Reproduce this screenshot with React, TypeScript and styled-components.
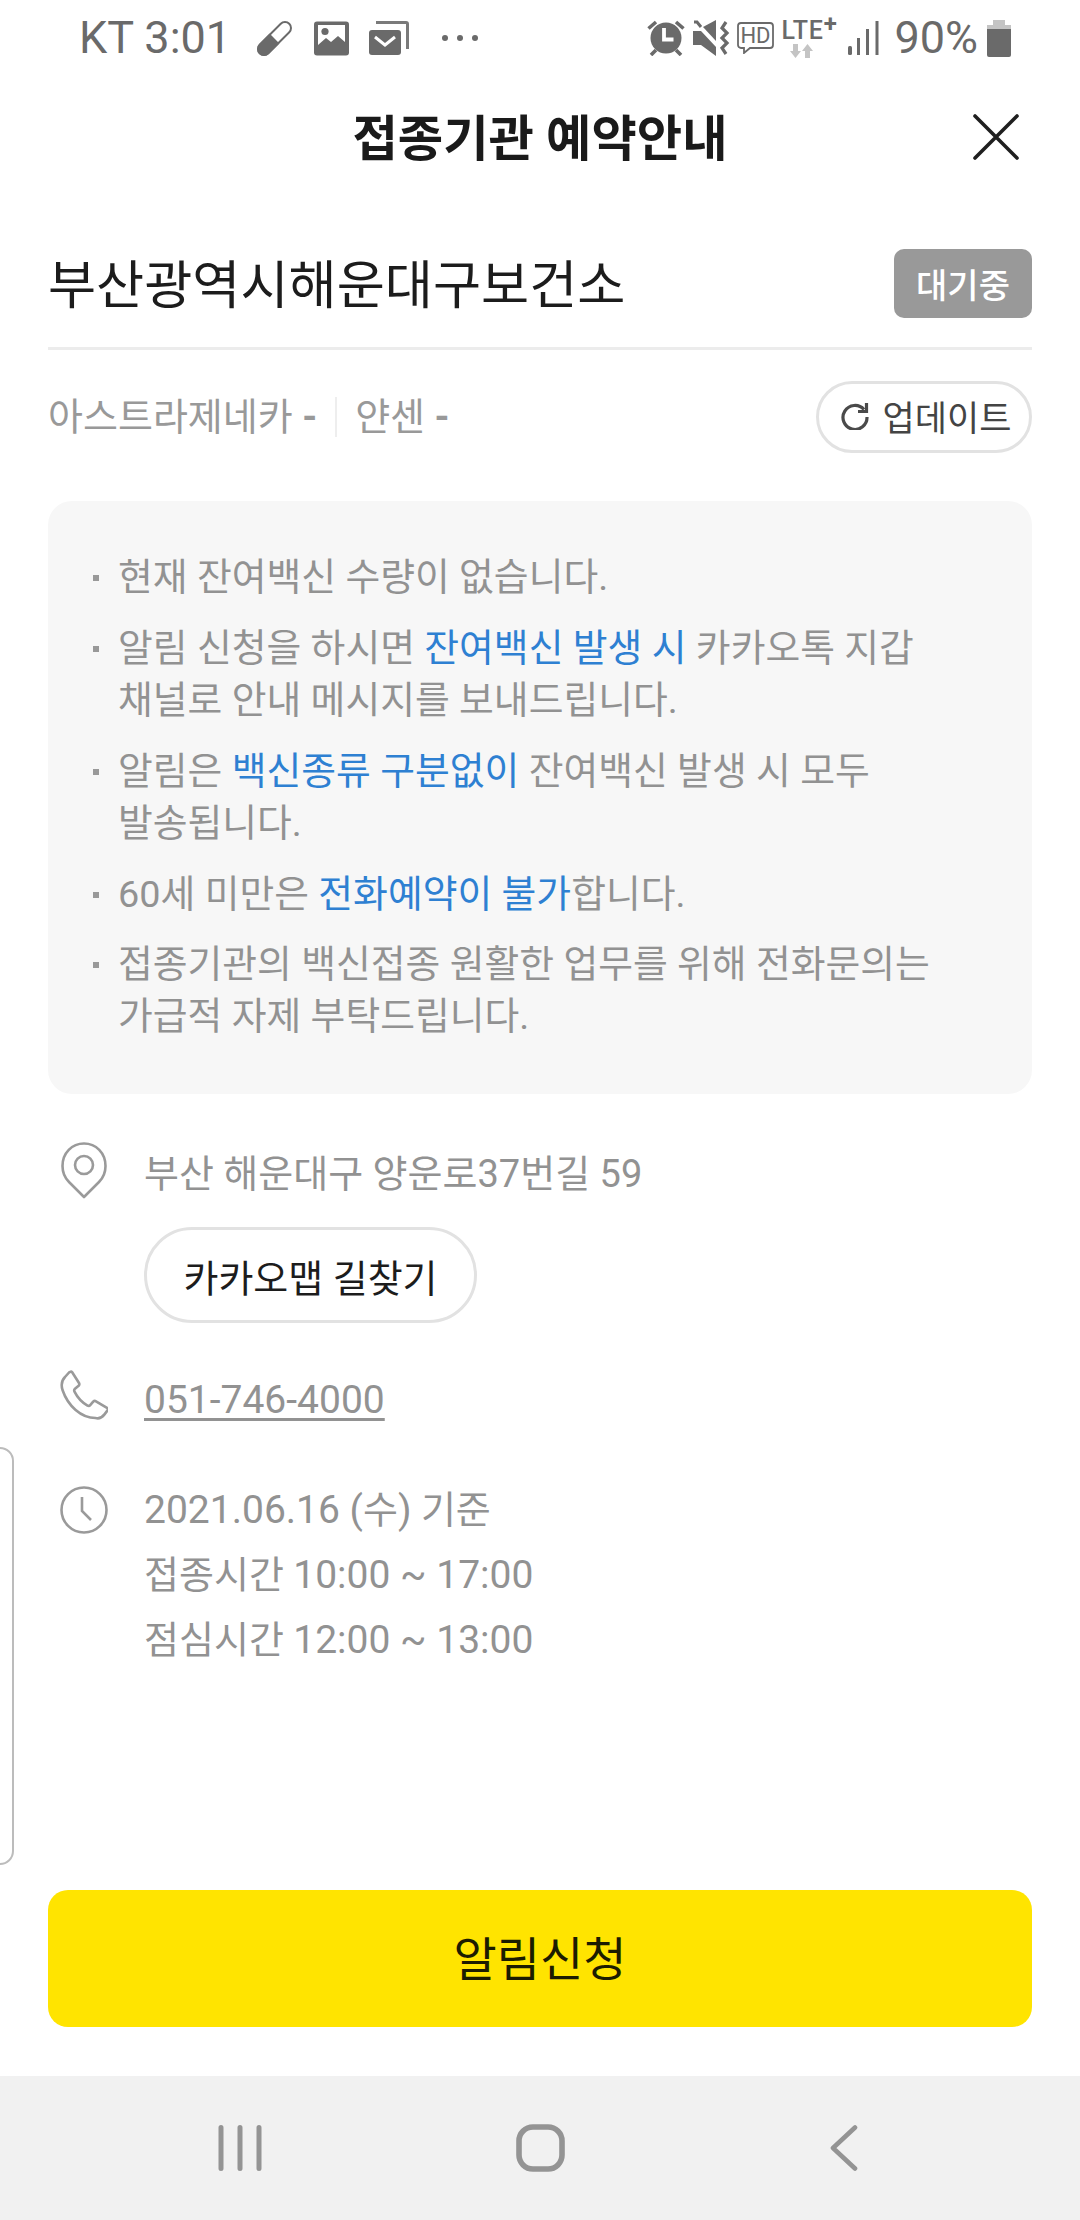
import React from "react";
import styled, { createGlobalStyle } from "styled-components";

const GlobalStyle = createGlobalStyle`
  html, body {
    margin: 0;
    padding: 0;
    background: #fff;
  }
  * {
    box-sizing: border-box;
  }
`;

const FONT = `Roboto, "Noto Sans CJK KR", "Noto Sans", sans-serif`;

const Screen = styled.div`
  position: relative;
  width: 1080px;
  height: 2220px;
  display: flex;
  flex-direction: column;
  background: #fff;
  font-family: ${FONT};
  overflow: hidden;
`;

const StatusBar = styled.div`
  height: 76px;
  padding: 0 69px 0 79px;
  display: flex;
  align-items: center;
  justify-content: space-between;
  color: #6a6a6a;
  flex: none;
`;

const StatusGroup = styled.div`
  display: flex;
  align-items: center;
`;

const StatusText = styled.span<{ $mr?: number }>`
  font-size: 45px;
  line-height: 76px;
  white-space: nowrap;
  margin-right: ${(p) => p.$mr ?? 0}px;
`;

const StatusIcon = styled.svg<{ $mr?: number }>`
  display: block;
  flex: none;
  margin-right: ${(p) => p.$mr ?? 0}px;
`;

const LteStack = styled.div`
  width: 57px;
  height: 40px;
  margin-right: 10px;
  display: flex;
  flex-direction: column;
  align-items: flex-start;
`;

const LteLabel = styled.span`
  font-size: 25px;
  line-height: 26px;
  font-weight: 500;
  letter-spacing: 0.8px;
  white-space: nowrap;
`;

const LtePlus = styled.sup`
  font-size: 24px;
  line-height: 0;
  font-weight: 700;
  vertical-align: 7px;
`;

const TitleBar = styled.header`
  height: 122px;
  flex: none;
  padding: 0 61px 0 0;
  display: flex;
  align-items: center;
  justify-content: flex-end;
  position: relative;
`;

const Title = styled.h1`
  position: absolute;
  left: 0;
  right: 0;
  margin: 4px 0 0;
  text-align: center;
  font-size: 49.3px;
  line-height: 60px;
  font-weight: 700;
  color: #1a1a1a;
`;

const Body = styled.main`
  flex: 1;
  padding: 0 48px;
  display: flex;
  flex-direction: column;
`;

const NameRow = styled.div`
  height: 152px;
  padding: 51px 0 30px;
  display: flex;
  align-items: center;
  justify-content: space-between;
  border-bottom: 3px solid #ececec;
`;

const Name = styled.h2`
  margin: 5px 0 0;
  font-size: 52.3px;
  line-height: 70px;
  font-weight: 400;
  color: #1c1c1c;
  white-space: nowrap;
`;

const Badge = styled.span`
  width: 138px;
  height: 69px;
  border-radius: 10px;
  background: #999;
  color: #fff;
  font-size: 34px;
  font-weight: 500;
  display: flex;
  align-items: center;
  justify-content: center;
`;

const VaccineRow = styled.div`
  margin-top: 31px;
  height: 72px;
  display: flex;
  align-items: center;
  justify-content: space-between;
`;

const VaccineList = styled.div`
  display: flex;
  align-items: center;
  font-size: 38px;
  color: #999;
`;

const Vaccine = styled.span<{ $divided?: boolean }>`
  padding-left: ${(p) => (p.$divided ? 18 : 0)}px;
  padding-right: ${(p) => (p.$divided ? 0 : 18)}px;
  border-left: ${(p) => (p.$divided ? "2px solid #eee" : "none")};
  line-height: 40px;
`;

const Dash = styled.b`
  font-weight: 700;
`;

const Pill = styled.button<{ $tall?: boolean }>`
  background: #fff;
  border: 3px solid #e2e2e2;
  border-radius: 48px;
  width: ${(p) => (p.$tall ? 333 : 216)}px;
  height: ${(p) => (p.$tall ? 96 : 72)}px;
  padding: ${(p) => (p.$tall ? "0" : "0 0 3px 4px")};
  display: flex;
  align-items: center;
  justify-content: center;
  gap: 14px;
  font-family: ${FONT};
  font-size: ${(p) => (p.$tall ? 38 : 35)}px;
  color: ${(p) => (p.$tall ? "#1c1c1c" : "#444")};
`;

const NoticeBox = styled.section`
  margin-top: 48px;
  height: 593px;
  padding: 50px 40px 0 45px;
  background: #f7f7f7;
  border-radius: 24px;
  display: flex;
  flex-direction: column;
  gap: 18.5px;
`;

const NoticeItem = styled.div`
  display: flex;
  font-size: 37.8px;
  line-height: 52.2px;
  color: #929292;
`;

const Dot = styled.span`
  flex: none;
  width: 6px;
  height: 6px;
  margin: 24px 19px 0 0;
  background: #999;
`;

const Blue = styled.span`
  color: #2e80d2;
`;

const InfoList = styled.section`
  margin-top: 48px;
  display: flex;
  flex-direction: column;
`;

const InfoRow = styled.div<{ $mt?: number }>`
  display: flex;
  gap: 24px;
  margin-top: ${(p) => p.$mt ?? 0}px;
`;

const InfoIconSlot = styled.div`
  width: 72px;
  flex: none;
  display: flex;
  justify-content: center;
`;

const InfoBody = styled.div`
  display: flex;
  flex-direction: column;
  align-items: flex-start;
  font-size: 38px;
  line-height: 65px;
  color: #929292;
`;

const Num = styled.span`
  font-size: 39px;
`;

const PhoneLink = styled.a`
  color: #929292;
  font-size: 39px;
  text-decoration: underline;
  text-underline-offset: 5px;
  text-decoration-thickness: 3px;
`;

const DirectionsWrap = styled.div`
  margin-top: 20px;
`;

const ActionWrap = styled.div`
  margin-top: auto;
  padding-bottom: 49px;
`;

const NotifyButton = styled.button`
  width: 100%;
  height: 137px;
  border: 0;
  border-radius: 20px;
  background: #ffe400;
  color: #1c1c00;
  font-family: ${FONT};
  font-size: 47px;
  padding: 0 0 6px;
`;

const NavBar = styled.nav`
  height: 144px;
  flex: none;
  background: #f1f1f1;
  display: flex;
  align-items: center;
  justify-content: center;
`;

const NavSlot = styled.div`
  width: 300px;
  display: flex;
  justify-content: center;
`;

const SideTab = styled.div`
  position: absolute;
  left: -20px;
  top: 1447px;
  width: 34px;
  height: 418px;
  border: 2px solid #bcbcbc;
  border-radius: 14px;
  background: #fff;
`;

const PillIcon = () => (
  <StatusIcon width="35" height="35" viewBox="0 0 35 35" $mr={22}>
    <g transform="rotate(45 17.5 17.5)">
      <rect x="11.5" y="-3.35" width="12" height="41.7" rx="6" fill="#fff" stroke="#6a6a6a" strokeWidth="2" />
      <path d="M10.5 17.5h14v14.85a7 7 0 0 1-14 0z" fill="#6a6a6a" />
    </g>
  </StatusIcon>
);

const ImageIcon = () => (
  <StatusIcon width="35" height="35" viewBox="0 0 35 35" $mr={20}>
    <rect x="0" y="0.5" width="35" height="34" rx="3" fill="#6a6a6a" />
    <path d="M4 4h27v17l-7-6-7 6-5-4-8 7z" fill="#fff" />
    <circle cx="11" cy="10.5" r="3.6" fill="#6a6a6a" />
  </StatusIcon>
);

const MailIcon = () => (
  <StatusIcon width="40" height="35" viewBox="0 0 40 35" $mr={33}>
    <path d="M7 1.5h30a1.5 1.5 0 0 1 1.5 1.5v25" fill="none" stroke="#7a7a7a" strokeWidth="3" />
    <rect x="0" y="9" width="32" height="25" rx="3" fill="#6a6a6a" />
    <path d="M6 16l10 8 10-8" fill="none" stroke="#fff" strokeWidth="3" />
  </StatusIcon>
);

const DotsIcon = () => (
  <StatusIcon width="36" height="8" viewBox="0 0 36 8">
    <circle cx="3" cy="4" r="3" fill="#6a6a6a" />
    <circle cx="18" cy="4" r="3" fill="#6a6a6a" />
    <circle cx="33" cy="4" r="3" fill="#6a6a6a" />
  </StatusIcon>
);

const AlarmIcon = () => (
  <StatusIcon width="38" height="36" viewBox="0 0 38 36" $mr={8}>
    <circle cx="19" cy="18" r="15.5" fill="#6a6a6a" />
    <path d="M1.5 8.5L9 2M36.5 8.5L29 2M4 35l5-5M34 35l-5-5" stroke="#6a6a6a" strokeWidth="3.6" />
    <path d="M17 8v11.5h9.5" fill="none" stroke="#fff" strokeWidth="3.8" />
  </StatusIcon>
);

const MuteIcon = () => (
  <StatusIcon width="37" height="36" viewBox="0 0 37 36" $mr={7}>
    <path d="M0 11h8l15 16v9L8 25H0z" fill="#6a6a6a" />
    <path d="M10 7l13-7v21z" fill="#6a6a6a" />
    <path d="M1 2l3 0 4 5" fill="none" stroke="#6a6a6a" strokeWidth="3" />
    <path d="M33 2l-4 6 5 5-5 5 5 5-5 5 4 6" fill="none" stroke="#6a6a6a" strokeWidth="3.2" />
  </StatusIcon>
);

const HdIcon = () => (
  <StatusIcon width="37" height="32" viewBox="0 0 37 32" $mr={7}>
    <path d="M4 1h29a3 3 0 0 1 3 3v19a3 3 0 0 1-3 3H13l-6 5v-5H4a3 3 0 0 1-3-3V4a3 3 0 0 1 3-3z" fill="none" stroke="#6a6a6a" strokeWidth="1.8" />
    <text x="18.5" y="21" textAnchor="middle" fontSize="22" fontWeight="400" fill="#6a6a6a" fontFamily="Roboto, sans-serif">HD</text>
  </StatusIcon>
);

const LteIcon = () => (
  <LteStack>
    <LteLabel>
      LTE<LtePlus>+</LtePlus>
    </LteLabel>
    <StatusIcon width="23" height="14" viewBox="0 0 23 14" style={{ marginLeft: 9 }}>
      <path d="M3 0h5v7h3l-5.500 7L0 7h3zM15 14h5V7h3L17.500 0 12 7h3z" fill="#c4c4c4" />
    </StatusIcon>
  </LteStack>
);

const SignalIcon = () => (
  <StatusIcon width="31" height="34" viewBox="0 0 31 34" $mr={15}>
    <rect x="0" y="25" width="4" height="9" rx="1.5" fill="#6a6a6a" />
    <rect x="9" y="17" width="3" height="17" fill="#6a6a6a" />
    <rect x="18" y="8" width="3" height="26" fill="#6a6a6a" />
    <rect x="27.5" y="0" width="3" height="34" fill="#6a6a6a" />
  </StatusIcon>
);

const BatteryIcon = () => (
  <StatusIcon width="24" height="37" viewBox="0 0 24 37">
    <path d="M6 0h12v5h6v4H0V5h6z" fill="#c4c4c4" />
    <path d="M0 9h24v26a2 2 0 0 1-2 2H2a2 2 0 0 1-2-2z" fill="#6a6a6a" />
  </StatusIcon>
);

const CloseIcon = () => (
  <svg width="46" height="46" viewBox="0 0 46 46" style={{ display: "block" }}>
    <path d="M2 2l42 42M44 2L2 44" stroke="#1f1f1f" strokeWidth="3.6" strokeLinecap="round" />
  </svg>
);

const RefreshIcon = () => (
  <svg width="28" height="28" viewBox="0 0 28 28" style={{ display: "block" }}>
    <path d="M23 7.500A12 12 0 1 0 26 15" fill="none" stroke="#4a4a4a" strokeWidth="3.2" />
    <path d="M25.500 1v8.500H17" fill="none" stroke="#4a4a4a" strokeWidth="3.2" />
  </svg>
);

const PinIcon = () => (
  <svg width="46" height="57" viewBox="0 0 46 57" style={{ display: "block" }}>
    <path d="M23 55L8 40C3 35 1.500 30 1.500 24 1.500 11 11 1.500 23 1.500S44.500 11 44.500 24c0 6-1.500 11-6.500 16z" fill="none" stroke="#9a9a9a" strokeWidth="2.6" strokeLinejoin="round" />
    <circle cx="23" cy="23" r="9" fill="none" stroke="#9a9a9a" strokeWidth="2.6" />
  </svg>
);

const PhoneIcon = () => (
  <svg width="48" height="53" viewBox="0 0 48 53" style={{ display: "block", marginTop: 2 }}>
    <path d="M12 2l7 11c.6 1 .3 2-.4 2.800l-3.600 3c-.8.700-1 1.800-.5 2.800 3 6 7 10.500 13 14 1 .5 2 .4 2.700-.4l3-3.500c.8-.8 1.800-1 2.800-.4l11 6.500c1 .6 1.200 1.700.5 2.600l-3 4c-2 2.600-5.500 4.600-9 3.600C21 48 8 36 2.500 20 1 15 2 10 5 7l4-4.500c.8-.8 2.300-1.300 3-.5z" fill="none" stroke="#9a9a9a" strokeWidth="2.6" strokeLinejoin="round" />
  </svg>
);

const ClockIcon = () => (
  <svg width="48" height="48" viewBox="0 0 48 48" style={{ display: "block", marginTop: 8 }}>
    <circle cx="24" cy="24" r="22.5" fill="none" stroke="#9a9a9a" strokeWidth="2.6" />
    <path d="M22 11v14l9 9" fill="none" stroke="#9a9a9a" strokeWidth="2.6" />
  </svg>
);

const RecentsIcon = () => (
  <svg width="44" height="46" viewBox="0 0 44 46" style={{ display: "block" }}>
    <path d="M3 2.500v41M22 2.500v41M41 2.500v41" stroke="#949494" strokeWidth="5" strokeLinecap="round" />
  </svg>
);

const HomeIcon = () => (
  <svg width="49" height="48" viewBox="0 0 49 48" style={{ display: "block" }}>
    <rect x="3" y="3" width="43" height="42" rx="14" fill="none" stroke="#949494" strokeWidth="5.6" />
  </svg>
);

const BackIcon = () => (
  <svg width="28" height="46" viewBox="0 0 28 46" style={{ display: "block", marginLeft: 7 }}>
    <path d="M25 2.500L3 23l22 20.500" fill="none" stroke="#949494" strokeWidth="4.6" strokeLinecap="round" strokeLinejoin="round" />
  </svg>
);

const App = () => {
  return (
    <Screen>
      <GlobalStyle />
      <StatusBar>
        <StatusGroup>
          <StatusText $mr={26}>KT 3:01</StatusText>
          <PillIcon />
          <ImageIcon />
          <MailIcon />
          <DotsIcon />
        </StatusGroup>
        <StatusGroup>
          <AlarmIcon />
          <MuteIcon />
          <HdIcon />
          <LteIcon />
          <SignalIcon />
          <StatusText $mr={9}>90%</StatusText>
          <BatteryIcon />
        </StatusGroup>
      </StatusBar>
      <TitleBar>
        <Title>접종기관 예약안내</Title>
        <CloseIcon />
      </TitleBar>
      <Body>
        <NameRow>
          <Name>부산광역시해운대구보건소</Name>
          <Badge>대기중</Badge>
        </NameRow>
        <VaccineRow>
          <VaccineList>
            <Vaccine>
              아스트라제네카 <Dash>-</Dash>
            </Vaccine>
            <Vaccine $divided>
              얀센 <Dash>-</Dash>
            </Vaccine>
          </VaccineList>
          <Pill>
            <RefreshIcon />
            업데이트
          </Pill>
        </VaccineRow>
        <NoticeBox>
          <NoticeItem>
            <Dot />
            <div>현재 잔여백신 수량이 없습니다.</div>
          </NoticeItem>
          <NoticeItem>
            <Dot />
            <div>
              알림 신청을 하시면 <Blue>잔여백신 발생 시</Blue> 카카오톡 지갑
              <br />
              채널로 안내 메시지를 보내드립니다.
            </div>
          </NoticeItem>
          <NoticeItem>
            <Dot />
            <div>
              알림은 <Blue>백신종류 구분없이</Blue> 잔여백신 발생 시 모두
              <br />
              발송됩니다.
            </div>
          </NoticeItem>
          <NoticeItem>
            <Dot />
            <div>
              60세 미만은 <Blue>전화예약이 불가</Blue>합니다.
            </div>
          </NoticeItem>
          <NoticeItem>
            <Dot />
            <div>
              접종기관의 백신접종 원활한 업무를 위해 전화문의는
              <br />
              가급적 자제 부탁드립니다.
            </div>
          </NoticeItem>
        </NoticeBox>
        <InfoList>
          <InfoRow>
            <InfoIconSlot>
              <PinIcon />
            </InfoIconSlot>
            <InfoBody>
              <span>부산 해운대구 양운로37번길 59</span>
              <DirectionsWrap>
                <Pill $tall>카카오맵 길찾기</Pill>
              </DirectionsWrap>
            </InfoBody>
          </InfoRow>
          <InfoRow $mt={45}>
            <InfoIconSlot>
              <PhoneIcon />
            </InfoIconSlot>
            <InfoBody>
              <PhoneLink href="tel:051-746-4000">051-746-4000</PhoneLink>
            </InfoBody>
          </InfoRow>
          <InfoRow $mt={45}>
            <InfoIconSlot>
              <ClockIcon />
            </InfoIconSlot>
            <InfoBody>
              <span>
                <Num>2021.06.16 (</Num>수<Num>)</Num> 기준
              </span>
              <span>
                접종시간 <Num>10:00 ~ 17:00</Num>
              </span>
              <span>
                점심시간 <Num>12:00 ~ 13:00</Num>
              </span>
            </InfoBody>
          </InfoRow>
        </InfoList>
        <ActionWrap>
          <NotifyButton>알림신청</NotifyButton>
        </ActionWrap>
      </Body>
      <NavBar>
        <NavSlot>
          <RecentsIcon />
        </NavSlot>
        <NavSlot>
          <HomeIcon />
        </NavSlot>
        <NavSlot>
          <BackIcon />
        </NavSlot>
      </NavBar>
      <SideTab />
    </Screen>
  );
};

export default App;
